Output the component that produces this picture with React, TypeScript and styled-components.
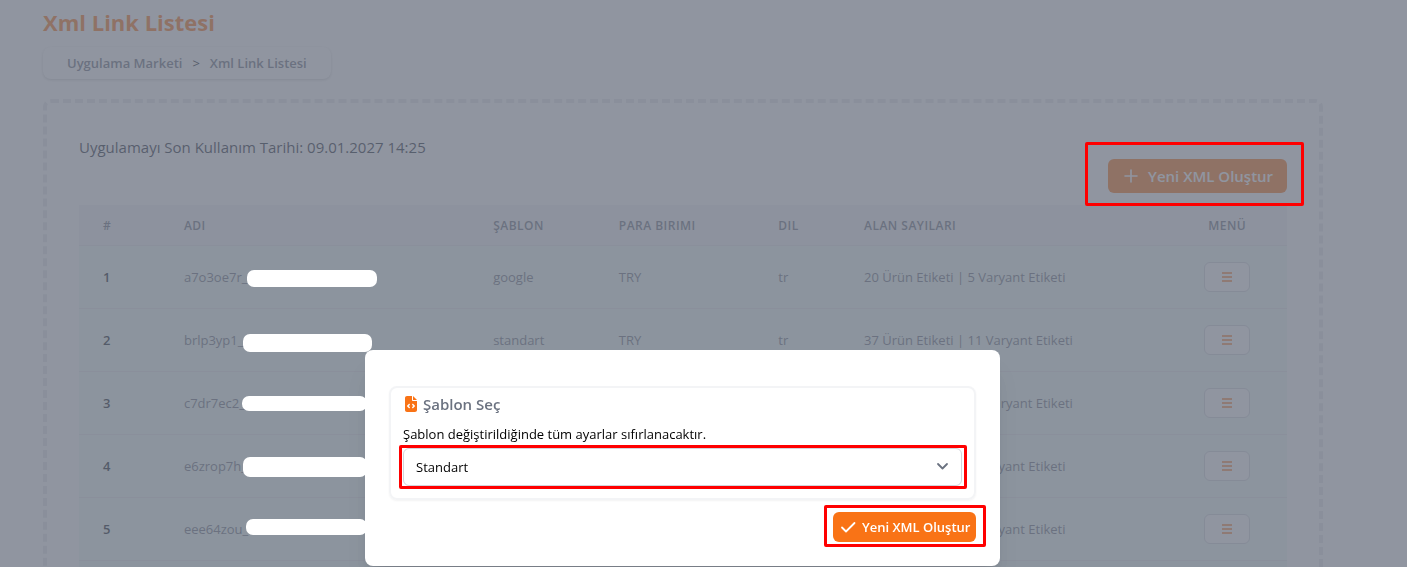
import React from "react";
import styled, { createGlobalStyle } from "styled-components";
import { FaFileCode } from "react-icons/fa6";

const Global = createGlobalStyle`
  *, *::before, *::after { box-sizing: border-box; }
  body {
    margin: 0;
    background: #fff;
    color: #000;
    font-family: "Open Sans", "Noto Sans", sans-serif;
    font-size: 13px;
    line-height: 20px;
    overflow: hidden;
  }
  h1, h2, p { margin: 0; }
  button, select { font: inherit; }
`;

const Page = styled.main`
  padding: 8px 84px 0 43px;
`;

const Title = styled.h1`
  font-size: 22px;
  line-height: 28px;
  font-weight: 700;
  color: #f97316;
`;

const Breadcrumb = styled.nav`
  display: inline-flex;
  align-items: center;
  gap: 10px;
  height: 32px;
  margin-top: 11px;
  padding: 0 24px;
  border-radius: 8px;
  box-shadow: 0 1px 3px rgba(0, 0, 0, 0.2);
  color: #111827;
`;

const Crumb = styled.a`
  font-weight: 600;
  color: #6b7280;
  text-decoration: none;
`;

const Card = styled.section`
  margin-top: 20px;
  padding: 32px;
  border: 4px dashed #e5e7eb;
  border-radius: 8px;
`;

const CardHead = styled.header`
  display: flex;
  justify-content: space-between;
  align-items: flex-end;
  height: 58px;
  margin-bottom: 12px;
`;

const Expiry = styled.p`
  align-self: flex-start;
  font-size: 15px;
  line-height: 24px;
  color: #1f2937;
`;

const Marked = styled.div`
  position: relative;
  display: flex;
`;

const Mark = styled.span<{ $inset: string }>`
  position: absolute;
  inset: ${(p) => p.$inset};
  z-index: 30;
  border: 3px solid #f00;
  border-radius: 2px;
  pointer-events: none;
`;

const PrimaryButton = styled.button<{ $large?: boolean }>`
  display: inline-flex;
  align-items: center;
  gap: ${(p) => (p.$large ? 10 : 6)}px;
  width: ${(p) => (p.$large ? 179 : 143)}px;
  height: ${(p) => (p.$large ? 34 : 30)}px;
  padding: 0 0 0 ${(p) => (p.$large ? 16 : 7)}px;
  border: 0;
  border-radius: 6px;
  background: #f97316;
  color: #fff;
  font-size: ${(p) => (p.$large ? 15 : 13)}px;
  font-weight: 600;
  white-space: nowrap;
`;

const Table = styled.table`
  width: 100%;
  table-layout: fixed;
  border-collapse: collapse;
  text-align: left;
`;

const Col = styled.col<{ $share: number }>`
  width: ${(p) => p.$share}%;
`;

const Th = styled.th<{ $center?: boolean }>`
  height: 40px;
  padding: 2px 24px 0;
  background: #f3f4f6;
  border-bottom: 1px solid #e5e7eb;
  color: #6b7280;
  font-size: 12px;
  font-weight: 600;
  letter-spacing: 0.04em;
  text-align: ${(p) => (p.$center ? "center" : "left")};
  white-space: nowrap;
`;

const Td = styled.td<{ $strong?: boolean; $center?: boolean }>`
  position: relative;
  height: 63px;
  padding: 0 24px;
  background: #effaf5;
  border-bottom: 1px solid #e5e7eb;
  color: ${(p) => (p.$strong ? "#111827" : "#6b7280")};
  font-weight: ${(p) => (p.$strong ? 600 : 400)};
  text-align: ${(p) => (p.$center ? "center" : "left")};
  white-space: nowrap;
`;

const Redaction = styled.span<{ $x: number; $y: number; $w: number; $h: number }>`
  position: absolute;
  z-index: 25;
  left: ${(p) => p.$x}px;
  top: ${(p) => p.$y}px;
  width: ${(p) => p.$w}px;
  height: ${(p) => p.$h}px;
  border-radius: 7px;
  background: #fff;
`;

const MenuButton = styled.button`
  display: inline-flex;
  align-items: center;
  justify-content: center;
  width: 46px;
  height: 30px;
  padding: 0;
  border: 1px solid #d1d5db;
  border-radius: 6px;
  background: #fff;
  color: #f97316;
  vertical-align: middle;
`;

const Overlay = styled.div`
  position: fixed;
  inset: 0;
  z-index: 10;
  display: flex;
  justify-content: center;
  align-items: flex-end;
  padding: 0 85px 1px 43px;
  background: rgba(107, 114, 128, 0.75);
`;

const Dialog = styled.div`
  width: 100%;
  max-width: 635px;
  padding: 36px 24px 24px;
  border-radius: 8px;
  background: #fff;
  box-shadow: 0 20px 25px -5px rgba(0, 0, 0, 0.1), 0 8px 10px -6px rgba(0, 0, 0, 0.1);
`;

const Panel = styled.section`
  padding: 6px 12px 12px;
  border: 2px solid #f3f4f6;
  border-radius: 8px;
  box-shadow: 0 1px 2px rgba(0, 0, 0, 0.05);
`;

const PanelTitle = styled.h2`
  display: flex;
  align-items: center;
  gap: 4px;
  font-size: 15px;
  line-height: 20px;
  font-weight: 600;
  color: #6b7280;

  svg { color: #f97316; }
`;

const Label = styled.label`
  display: block;
  margin: 10px 0 4px;
`;

const SelectWrap = styled.div`
  position: relative;
`;

const Select = styled.select`
  display: block;
  width: 100%;
  height: 38px;
  padding: 0 12px;
  border: 1px solid #d1d5db;
  border-radius: 6px;
  background: #fff;
  color: #000;
  appearance: none;
`;

const Caret = styled.svg`
  position: absolute;
  top: 8px;
  right: 10px;
  pointer-events: none;
`;

const Actions = styled.footer`
  display: flex;
  justify-content: flex-end;
  margin-top: 12px;
`;

const rows = [
  { name: "a7o3oe7r_", template: "google", tags: "20 Ürün Etiketi | 5 Varyant Etiketi", bar: [87, 24, 130, 17] },
  { name: "brlp3yp1_", template: "standart", tags: "37 Ürün Etiketi | 11 Varyant Etiketi", bar: [83, 25, 129, 18] },
  { name: "c7dr7ec2_", template: "standart", tags: "37 Ürün Etiketi | 11 Varyant Etiketi", bar: [82, 24, 125, 15] },
  { name: "e6zrop7h_", template: "standart", tags: "37 Ürün Etiketi | 9 Varyant Etiketi", bar: [83, 22, 124, 20] },
  { name: "eee64zou_", template: "standart", tags: "37 Ürün Etiketi | 9 Varyant Etiketi", bar: [86, 21, 121, 16] },
];

const shares = [6.7, 25.6, 10.4, 13.2, 7.1, 27.1, 9.9];

const PlusIcon = () => (
  <svg width="14" height="14" viewBox="0 0 14 14" fill="none" stroke="currentColor" strokeWidth="1.6" strokeLinecap="round" aria-hidden="true">
    <path d="M7 1v12M1 7h12" />
  </svg>
);

const CheckIcon = () => (
  <svg width="16" height="14" viewBox="0 0 16 14" fill="none" stroke="currentColor" strokeWidth="1.8" strokeLinecap="round" strokeLinejoin="round" aria-hidden="true">
    <path d="M2 7.5l4 4L14.5 3" />
  </svg>
);

const BarsIcon = () => (
  <svg width="10" height="12" viewBox="0 0 10 12" fill="none" stroke="currentColor" strokeWidth="1.6" aria-hidden="true">
    <path d="M0 2h10M0 6h10M0 10h10" />
  </svg>
);

export default function App() {
  return (
    <>
      <Global />
      <Page>
        <Title>Xml Link Listesi</Title>
        <Breadcrumb aria-label="Breadcrumb">
          <Crumb href="#market">Uygulama Marketi</Crumb>
          <span>&gt;</span>
          <Crumb href="#liste">Xml Link Listesi</Crumb>
        </Breadcrumb>
        <Card>
          <CardHead>
            <Expiry>Uygulamayı Son Kullanım Tarihi: 09.01.2027 14:25</Expiry>
            <Marked>
              <PrimaryButton $large type="button">
                <PlusIcon />
                Yeni XML Oluştur
              </PrimaryButton>
              <Mark $inset="-17px -17px -13px -23px" />
            </Marked>
          </CardHead>
          <Table>
            <colgroup>
              {shares.map((share, i) => (
                <Col key={i} $share={share} />
              ))}
            </colgroup>
            <thead>
              <tr>
                <Th>#</Th>
                <Th>ADI</Th>
                <Th>ŞABLON</Th>
                <Th>PARA BIRIMI</Th>
                <Th>DIL</Th>
                <Th>ALAN SAYILARI</Th>
                <Th $center>MENÜ</Th>
              </tr>
            </thead>
            <tbody>
              {rows.map((row, i) => (
                <tr key={row.name}>
                  <Td $strong>{i + 1}</Td>
                  <Td>
                    {row.name}
                    <Redaction $x={row.bar[0]} $y={row.bar[1]} $w={row.bar[2]} $h={row.bar[3]} />
                  </Td>
                  <Td>{row.template}</Td>
                  <Td>TRY</Td>
                  <Td>tr</Td>
                  <Td>{row.tags}</Td>
                  <Td $center>
                    <MenuButton type="button" aria-label="Menü">
                      <BarsIcon />
                    </MenuButton>
                  </Td>
                </tr>
              ))}
            </tbody>
            <tfoot>
              <tr>
                <Td colSpan={7} />
              </tr>
            </tfoot>
          </Table>
        </Card>
      </Page>
      <Overlay>
        <Dialog role="dialog" aria-modal="true" aria-labelledby="dialog-title">
          <Panel>
            <PanelTitle id="dialog-title">
              <FaFileCode size={16} />
              Şablon Seç
            </PanelTitle>
            <Label htmlFor="template">Şablon değiştirildiğinde tüm ayarlar sıfırlanacaktır.</Label>
            <SelectWrap>
              <Select id="template" defaultValue="standart">
                <option value="standart">Standart</option>
                <option value="google">Google</option>
              </Select>
              <Caret width="20" height="20" viewBox="0 0 20 20" fill="none" stroke="#6b7280" strokeWidth="1.8" strokeLinecap="round" strokeLinejoin="round" aria-hidden="true">
                <path d="M6 8l4.5 4.5L15 8" />
              </Caret>
              <Mark $inset="-3px -5px -3px -4px" />
            </SelectWrap>
          </Panel>
          <Actions>
            <Marked>
              <PrimaryButton type="button">
                <CheckIcon />
                Yeni XML Oluştur
              </PrimaryButton>
              <Mark $inset="-7px -10px -5px -9px" />
            </Marked>
          </Actions>
        </Dialog>
      </Overlay>
    </>
  );
}
